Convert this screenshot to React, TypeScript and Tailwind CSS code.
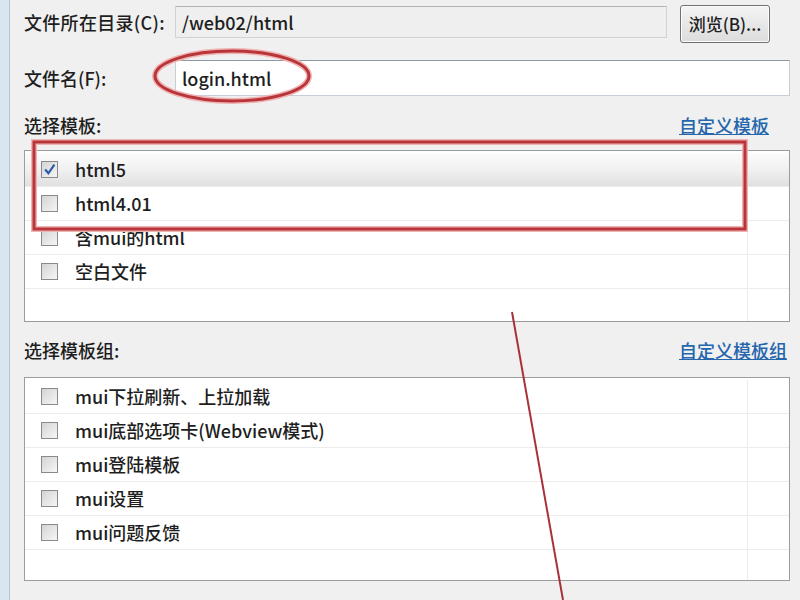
import React from 'react';

interface ListRow {
    label: string;
    checked?: boolean;
    selected?: boolean;
}

const templates: ListRow[] = [
    { label: 'html5', checked: true, selected: true },
    { label: 'html4.01' },
    { label: '含mui的html' },
    { label: '空白文件' },
];

const groups: ListRow[] = [
    { label: 'mui下拉刷新、上拉加载' },
    { label: 'mui底部选项卡(Webview模式)' },
    { label: 'mui登陆模板' },
    { label: 'mui设置' },
    { label: 'mui问题反馈' },
];

const CheckBox: React.FC<{ checked?: boolean }> = ({ checked }) => (
    <div className="w-[17px] h-[17px] border border-[#8a8a8a] bg-gradient-to-br from-[#d4d4d4] to-[#f6f6f6] flex items-center justify-center shrink-0">
        {checked && (
            <svg width="13" height="13" viewBox="0 0 12 12">
                <path d="M2 6 L5 9.5 L10.5 1.5" fill="none" stroke="#2a5aa8" strokeWidth="2" />
            </svg>
        )}
    </div>
);

const ListBox: React.FC<{ rows: ListRow[]; height: string }> = ({ rows, height }) => (
    <div className={`border border-[#9c9c9c] bg-white pt-[2px] flex flex-col ${height}`}>
        {rows.map((row) => (
            <div
                key={row.label}
                className={`flex h-[34px] border-b border-[#ececec] ${row.selected ? 'bg-gradient-to-b from-[#fbfbfb] via-[#f1f1f1] to-[#e0e0e0]' : ''}`}
            >
                <div className="flex-1 flex items-center pl-[16px] gap-[17px]">
                    <CheckBox checked={row.checked} />
                    <span className="text-[18px] font-medium text-[#1e1e1e]">{row.label}</span>
                </div>
                <div className="w-[42px] border-l border-[#ececec]" />
            </div>
        ))}
        <div className="flex flex-1">
            <div className="flex-1" />
            <div className="w-[42px] border-l border-[#ececec]" />
        </div>
    </div>
);

export default function App() {
    return (
        <div
            className="relative w-[800px] h-[600px] overflow-hidden bg-[#f0f0f0] flex"
            style={{ fontFamily: '"Noto Sans CJK SC", "Liberation Sans", sans-serif' }}
        >
            <div className="w-[10px] bg-[#d9e6f2] border-r border-[#b9c6d3]" />

            <div className="flex-1 flex flex-col pl-[14px] pr-[10px] pt-[5px] text-[#1e1e1e] font-medium">
                {/* Directory row */}
                <div className="flex items-start h-[38px]">
                    <span className="w-[151px] mt-[1px] leading-[32px] text-[18px] tracking-[0.3px]">文件所在目录(C):</span>
                    <div className="mt-[1px] h-[32px] w-[492px] border border-[#d2d2d2] border-t-[#b4b4b4] bg-[#efefef] flex items-center pl-[6px] text-[18px]">
                        /web02/html
                    </div>
                    <button className="ml-[13px] h-[38px] w-[90px] rounded-[3px] border border-[#707070] bg-gradient-to-b from-[#f4f4f4] to-[#dcdcdc] text-[17px] font-medium text-[#1e1e1e] shadow-[inset_0_0_0_1px_#fcfcfc]">
                        浏览(B)...
                    </button>
                </div>

                {/* File name row */}
                <div className="flex items-center h-[36px] mt-[17px]">
                    <span className="w-[151px] text-[18px]">文件名(F):</span>
                    <div className="flex-1 h-[36px] border border-[#c7ced6] border-t-[#8d99a6] bg-white flex items-center pl-[6px] text-[18px]">
                        login.html
                    </div>
                </div>

                {/* Templates */}
                <div className="flex items-center justify-between h-[24px] mt-[17px]">
                    <span className="text-[18px]">选择模板:</span>
                    <span className="w-[111px] text-[18px] text-[#2566ad] underline">自定义模板</span>
                </div>
                <div className="mt-[13px]">
                    <ListBox rows={templates} height="h-[172px]" />
                </div>

                {/* Template groups */}
                <div className="flex items-center justify-between h-[24px] mt-[16px]">
                    <span className="text-[18px]">选择模板组:</span>
                    <span className="w-[111px] text-[18px] text-[#2566ad] underline whitespace-nowrap">自定义模板组</span>
                </div>
                <div className="mt-[15px]">
                    <ListBox rows={groups} height="h-[204px]" />
                </div>
            </div>

            {/* Red annotations drawn over the dialog */}
            <svg className="absolute inset-0 pointer-events-none" width="800" height="600" viewBox="0 0 800 600">
                <ellipse cx="232" cy="76" rx="77" ry="25" fill="none" stroke="#f0b3b3" strokeWidth="6" />
                <ellipse cx="232" cy="76" rx="77" ry="25" fill="none" stroke="#b8353a" strokeWidth="3" />
                <rect x="34" y="142" width="711" height="87" fill="none" stroke="#f0b3b3" strokeWidth="6" />
                <rect x="34" y="142" width="711" height="87" fill="none" stroke="#b8353a" strokeWidth="3" />
                <line x1="512" y1="312" x2="563" y2="600" stroke="#a8323a" strokeWidth="2" />
            </svg>
        </div>
    );
}
